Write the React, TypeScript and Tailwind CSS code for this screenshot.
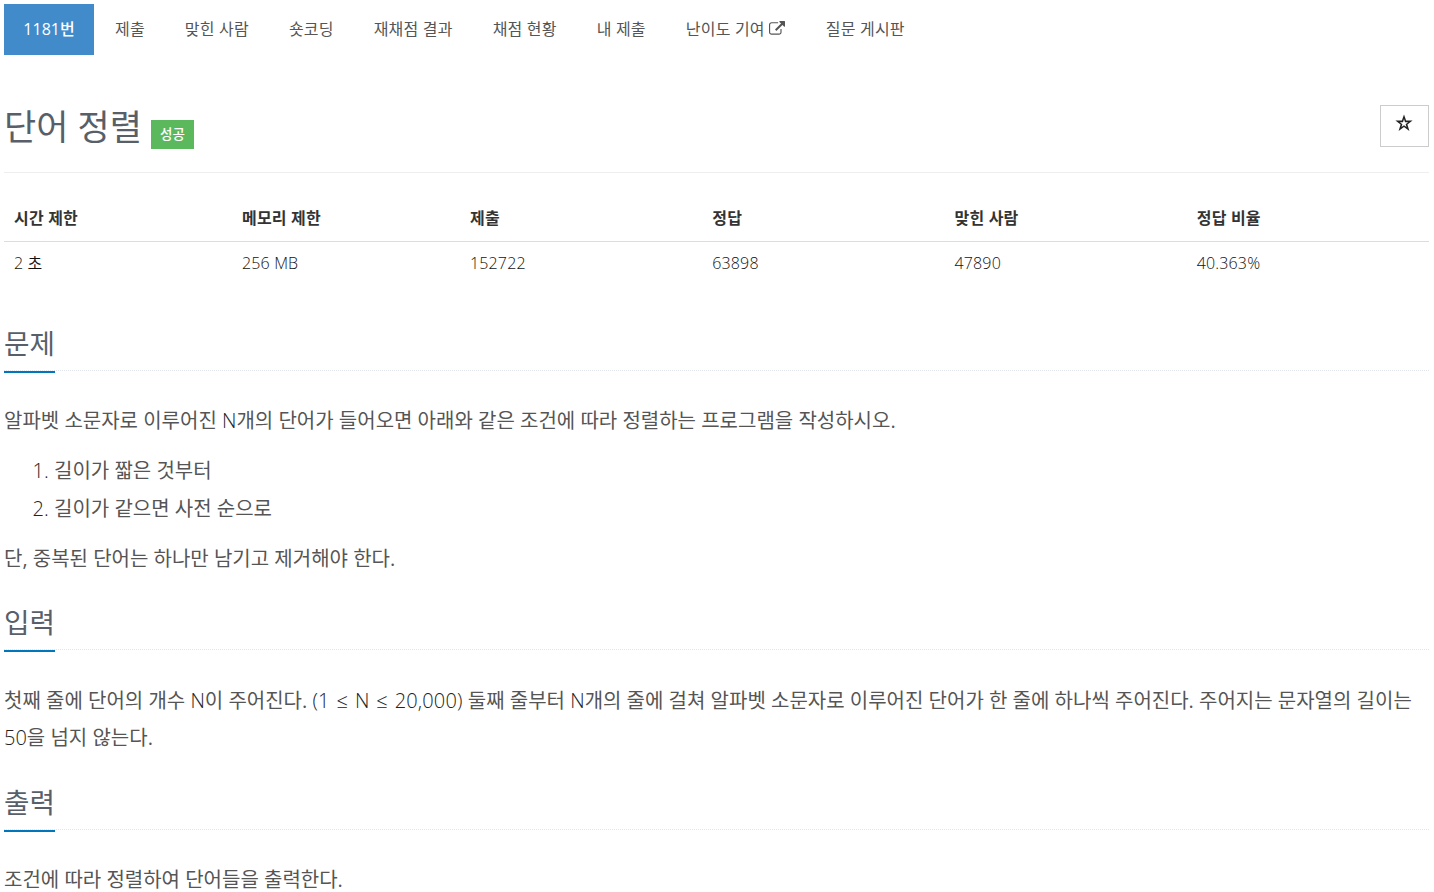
import React from 'react';

interface NavItem {
  label: string;
  active?: boolean;
  external?: boolean;
}

interface Stat {
  label: string;
  value: string;
  width: string;
}

const NAV_ITEMS: NavItem[] = [
  { label: '1181번', active: true },
  { label: '제출' },
  { label: '맞힌 사람' },
  { label: '숏코딩' },
  { label: '재채점 결과' },
  { label: '채점 현황' },
  { label: '내 제출' },
  { label: '난이도 기여', external: true },
  { label: '질문 게시판' },
];

const STATS: Stat[] = [
  { label: '시간 제한', value: '2 초', width: 'w-[16%]' },
  { label: '메모리 제한', value: '256 MB', width: 'w-[16%]' },
  { label: '제출', value: '152722', width: 'w-[17%]' },
  { label: '정답', value: '63898', width: 'w-[17%]' },
  { label: '맞힌 사람', value: '47890', width: 'w-[17%]' },
  { label: '정답 비율', value: '40.363%', width: 'w-[17%]' },
];

const ExternalIcon: React.FC = () => (
  <svg className="mr-px mb-[2px] ml-1 h-4 w-4" viewBox="0 0 1792 1792" fill="currentColor">
    <path d="M1408 928v320q0 119-84.500 203.500t-203.500 84.500h-832q-119 0-203.500-84.500t-84.500-203.500v-832q0-119 84.500-203.500t203.500-84.500h704q14 0 23 9t9 23v64q0 14-9 23t-23 9h-704q-66 0-113 47t-47 113v832q0 66 47 113t113 47h832q66 0 113-47t47-113v-320q0-14 9-23t23-9h64q14 0 23 9t9 23zm384-864v512q0 26-19 45t-45 19-45-19l-176-176-652 652q-10 10-23 10t-23-10l-114-114q-10-10-10-23t10-23l652-652-176-176q-19-19-19-45t19-45 45-19h512q26 0 45 19t19 45z" />
  </svg>
);

// Latin letters and digits are set lighter than the Korean around them
const Light: React.FC<{ children: React.ReactNode }> = ({ children }) => (
  <span className="font-light text-[#222]">{children}</span>
);

const Section: React.FC<{ title: string; children: React.ReactNode }> = ({ title, children }) => (
  <section className="mb-[24.4px]">
    <div className="mb-[31px] flex h-[49px] border-b border-dotted border-[#e0e5ec]">
      <h2 className="h-[51px] border-b-2 border-[#0076bd] text-[27.7px] leading-[42px] text-[#585f69]">
        {title}
      </h2>
    </div>
    <div className="text-[20px] leading-[37.5px] text-[#555]">{children}</div>
  </section>
);

const App: React.FC = () => {
  return (
    <div className="h-[892px] overflow-hidden bg-white pt-1 pr-[5px] pl-1 font-['Open_Sans','Noto_Sans_CJK_KR',sans-serif] text-[#333]">
      {/* Problem menu */}
      <nav className="flex h-[51px] text-[16px] leading-[51px] text-[#555]">
        {NAV_ITEMS.map((item) => (
          <a
            key={item.label}
            className={`flex items-center whitespace-nowrap ${
              item.active
                ? 'mr-px w-[90px] justify-center bg-[#428bca] font-medium text-white'
                : 'px-5 tracking-[0.2px]'
            }`}
          >
            {item.label}
            {item.external && <ExternalIcon />}
          </a>
        ))}
      </nav>

      {/* Title */}
      <header className="mt-[50px] flex h-[68px] items-start justify-between border-b border-[#eee]">
        <div className="flex">
          <h1 className="w-[139px] text-[35px] leading-[44px] whitespace-nowrap text-[#585f69]">단어 정렬</h1>
          <span className="mt-[15px] ml-2 flex h-[29px] w-[43px] items-center justify-center bg-[#5cb85c] text-[13.5px] font-medium text-white">
            성공
          </span>
        </div>
        <button className="flex h-[42px] w-[49px] items-center justify-center border border-[#ccc] pr-px pb-[6px]">
          <svg className="h-[18px] w-[18px]" viewBox="0 0 18 18" fill="#222" fillRule="evenodd">
            <path d="M9 .5 11.100 6.500 17.600 6.500 12.400 10.500 14.400 17 9 13.100 3.600 17 5.600 10.500.4 6.500 6.900 6.500ZM9 5 8 8.300 4.900 8.300 7.400 10.200 6.500 13.100 9 11.200 11.500 13.100 10.600 10.200 13.100 8.300 10 8.300Z" />
          </svg>
        </button>
      </header>

      {/* Limits and statistics */}
      <table className="mt-[23px] w-full table-fixed text-left text-[16px] leading-[23px]">
        <thead>
          <tr className="h-[45px] border-b border-[#ddd]">
            {STATS.map((stat) => (
              <th key={stat.label} className={`px-[10px] pt-px font-bold tracking-[0.2px] ${stat.width}`}>
                {stat.label}
              </th>
            ))}
          </tr>
        </thead>
        <tbody>
          <tr className="h-[44px] font-[350] tracking-[0.15px] text-[#111]">
            {STATS.map((stat) => (
              <td key={stat.label} className="px-[10px]">{stat.value}</td>
            ))}
          </tr>
        </tbody>
      </table>

      <main className="mt-[36.9px]">
        <Section title="문제">
          <p>
            알파벳 소문자로 이루어진 <Light>N</Light>개의 단어가 들어오면 아래와 같은 조건에 따라 정렬하는 프로그램을 작성하시오.
          </p>
          <ol className="mt-[12.7px] mb-[12.3px] list-decimal pl-[50px] leading-[38px] marker:font-light marker:text-[#222]">
            <li>길이가 짧은 것부터</li>
            <li>길이가 같으면 사전 순으로</li>
          </ol>
          <p className="-mb-px">단, 중복된 단어는 하나만 남기고 제거해야 한다.</p>
        </Section>

        <Section title="입력">
          <p className="mt-[32px] mb-[25px] leading-[37px]">
            첫째 줄에 단어의 개수 <Light>N</Light>이 주어진다.{' '}
            <span className="font-light tracking-[0.15px] text-[#222] [word-spacing:1.5px]">(1 ≤ N ≤ 20,000)</span>{' '}
            둘째 줄부터 <Light>N</Light>개의 줄에 걸쳐 알파벳 소문자로 이루어진 단어가 한 줄에 하나씩 주어진다. 주어지는 문자열의 길이는 <Light>50</Light>을 넘지 않는다.
          </p>
        </Section>

        <Section title="출력">
          <p>조건에 따라 정렬하여 단어들을 출력한다.</p>
        </Section>
      </main>
    </div>
  );
};

export default App;
